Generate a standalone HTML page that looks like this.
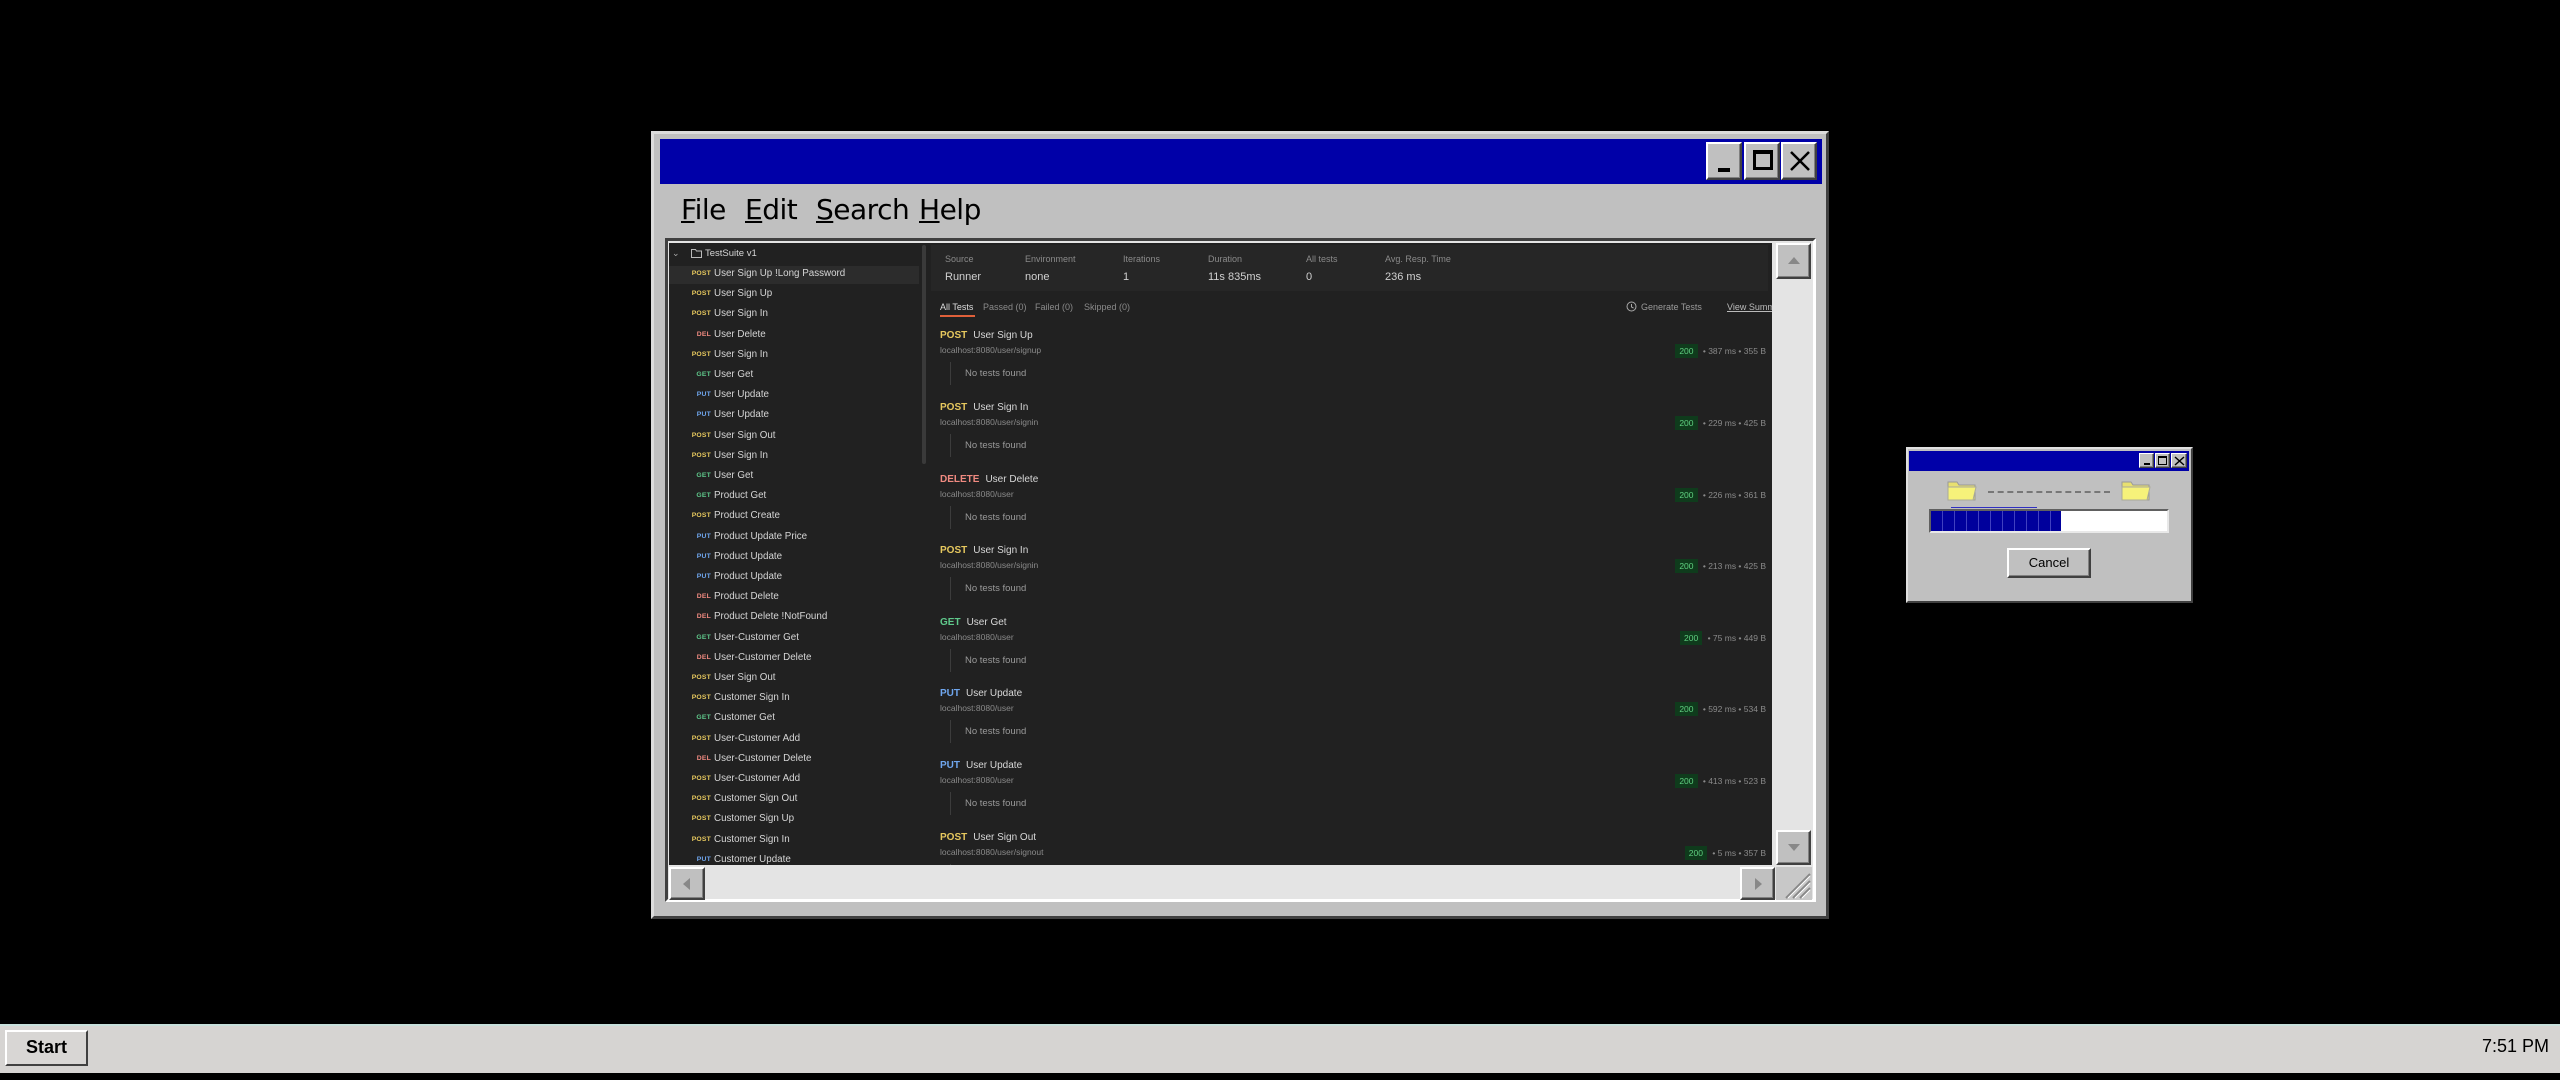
<!DOCTYPE html>
<html><head><meta charset="utf-8">
<style>
*{margin:0;padding:0;box-sizing:border-box}
body{width:2560px;height:1080px;background:#000;position:relative;overflow:hidden;font-family:"Liberation Sans",sans-serif}
.a{position:absolute}
.raised{background:#c0c0c0;border:2px solid;border-color:#fff #404040 #404040 #fff;box-shadow:inset -1px -1px 0 #808080}
.side div.r{position:absolute;left:0;width:254px;height:20px;font-size:9.8px;color:#d6d6d6;line-height:20px}
.side .m{position:absolute;right:212px;font-size:6.8px;font-weight:bold;letter-spacing:.2px}
.side .n{position:absolute;left:45px}
.P{color:#e6c85e}.G{color:#5fc98b}.U{color:#6fa6ee}.D{color:#f08a80}
.lbl{font-size:9px;color:#8a8a8a}
.val{font-size:11px;color:#d0d0d0}
.ent{position:absolute;left:940px;width:828px;height:72px}
.ent .h{position:absolute;top:-6px;left:0;font-size:10px;color:#d8d8d8;white-space:nowrap}
.ent .h b{margin-right:6px}
.ent .u{position:absolute;top:9px;left:0;font-size:8.5px;color:#8a8a8a}
.ent .bar{position:absolute;left:10px;top:26px;width:1px;height:23px;background:#3c3c3c}
.ent .nt{position:absolute;left:25px;top:32px;font-size:9.5px;color:#9a9a9a}
.ent .st{position:absolute;right:2px;top:8px;font-size:8.5px;color:#8a8a8a;white-space:nowrap}
.ent .st span.c{display:inline-block;background:#0f3b1c;color:#5fd080;padding:2px 4px;margin-right:3px}
</style></head><body>

<div class="a" style="left:651px;top:131px;width:1178px;height:788px;background:#c0c0c0;border:3px solid;border-color:#dcdcdc #404040 #404040 #dcdcdc"></div>
<div class="a" style="left:660px;top:139px;width:1162px;height:45px;background:#0000a8"></div>
<div class="a raised" style="left:1706px;top:142px;width:36px;height:38px"><div class="a" style="left:10px;top:24px;width:12px;height:4px;background:#000"></div></div>
<div class="a raised" style="left:1744px;top:142px;width:36px;height:38px"><div class="a" style="left:7px;top:6px;width:20px;height:20px;border:3px solid #000;border-top-width:4px"></div></div>
<div class="a raised" style="left:1781px;top:142px;width:36px;height:38px"><svg class="a" style="left:6px;top:6px" width="22" height="22"><path d="M2 2L20 20M20 2L2 20" stroke="#000" stroke-width="2.5"/></svg></div>

<div class="a" style="left:681px;top:193px;font-size:28px;color:#000;line-height:34px;font-family:'DejaVu Sans',sans-serif;letter-spacing:-0.5px">
<span style="position:absolute;left:0"><u>F</u>ile</span>
<span style="position:absolute;left:64px"><u>E</u>dit</span>
<span style="position:absolute;left:135px"><u>S</u>earch</span>
<span style="position:absolute;left:238px"><u>H</u>elp</span>
</div>

<div class="a" style="left:665px;top:238px;width:1151px;height:664px;border:3px solid;border-color:#404040 #fff #fff #404040;background:#e4e4e4"></div>
<div class="a" style="left:669px;top:243px;width:1103px;height:622px;background:#212121"></div>
<div class="a" style="left:931px;top:245px;width:837px;height:46px;background:#262626"></div>

<div class="a" style="left:669px;top:266px;width:250px;height:18px;background:#2c2c2c"></div>
<div class="a" style="left:922px;top:245px;width:4px;height:219px;background:#3a3a3a;border-radius:2px"></div>
<div class="a" style="left:672px;top:248px;font-size:9px;color:#aaa">&#8964;</div>
<svg class="a" style="left:691px;top:248px" width="11" height="10"><path d="M0.5 1.5h4l1 1.5h5v6.5h-10z" fill="none" stroke="#bbb" stroke-width="1"/></svg>
<div class="a" style="left:705px;top:248px;font-size:9.5px;color:#d6d6d6">TestSuite v1</div>
<div class="a side" style="left:669px;top:264px;width:254px;height:601px;overflow:hidden">
<div class="r" style="top:0"><span class="m P">POST</span><span class="n">User Sign Up !Long Password</span></div>
<div class="r" style="top:20.2px"><span class="m P">POST</span><span class="n">User Sign Up</span></div>
<div class="r" style="top:40.4px"><span class="m P">POST</span><span class="n">User Sign In</span></div>
<div class="r" style="top:60.6px"><span class="m D">DEL</span><span class="n">User Delete</span></div>
<div class="r" style="top:80.8px"><span class="m P">POST</span><span class="n">User Sign In</span></div>
<div class="r" style="top:101px"><span class="m G">GET</span><span class="n">User Get</span></div>
<div class="r" style="top:121.2px"><span class="m U">PUT</span><span class="n">User Update</span></div>
<div class="r" style="top:141.4px"><span class="m U">PUT</span><span class="n">User Update</span></div>
<div class="r" style="top:161.6px"><span class="m P">POST</span><span class="n">User Sign Out</span></div>
<div class="r" style="top:181.8px"><span class="m P">POST</span><span class="n">User Sign In</span></div>
<div class="r" style="top:202px"><span class="m G">GET</span><span class="n">User Get</span></div>
<div class="r" style="top:222.2px"><span class="m G">GET</span><span class="n">Product Get</span></div>
<div class="r" style="top:242.4px"><span class="m P">POST</span><span class="n">Product Create</span></div>
<div class="r" style="top:262.6px"><span class="m U">PUT</span><span class="n">Product Update Price</span></div>
<div class="r" style="top:282.8px"><span class="m U">PUT</span><span class="n">Product Update</span></div>
<div class="r" style="top:303px"><span class="m U">PUT</span><span class="n">Product Update</span></div>
<div class="r" style="top:323.2px"><span class="m D">DEL</span><span class="n">Product Delete</span></div>
<div class="r" style="top:343.4px"><span class="m D">DEL</span><span class="n">Product Delete !NotFound</span></div>
<div class="r" style="top:363.6px"><span class="m G">GET</span><span class="n">User-Customer Get</span></div>
<div class="r" style="top:383.8px"><span class="m D">DEL</span><span class="n">User-Customer Delete</span></div>
<div class="r" style="top:404px"><span class="m P">POST</span><span class="n">User Sign Out</span></div>
<div class="r" style="top:424.2px"><span class="m P">POST</span><span class="n">Customer Sign In</span></div>
<div class="r" style="top:444.4px"><span class="m G">GET</span><span class="n">Customer Get</span></div>
<div class="r" style="top:464.6px"><span class="m P">POST</span><span class="n">User-Customer Add</span></div>
<div class="r" style="top:484.8px"><span class="m D">DEL</span><span class="n">User-Customer Delete</span></div>
<div class="r" style="top:505px"><span class="m P">POST</span><span class="n">User-Customer Add</span></div>
<div class="r" style="top:525.2px"><span class="m P">POST</span><span class="n">Customer Sign Out</span></div>
<div class="r" style="top:545.4px"><span class="m P">POST</span><span class="n">Customer Sign Up</span></div>
<div class="r" style="top:565.6px"><span class="m P">POST</span><span class="n">Customer Sign In</span></div>
<div class="r" style="top:585.8px"><span class="m U">PUT</span><span class="n">Customer Update</span></div>
</div>

<div class="a lbl" style="left:945px;top:254px">Source</div>
<div class="a lbl" style="left:1025px;top:254px">Environment</div>
<div class="a lbl" style="left:1123px;top:254px">Iterations</div>
<div class="a lbl" style="left:1208px;top:254px">Duration</div>
<div class="a lbl" style="left:1306px;top:254px">All tests</div>
<div class="a lbl" style="left:1385px;top:254px">Avg. Resp. Time</div>
<div class="a val" style="left:945px;top:271px">Runner</div>
<div class="a val" style="left:1025px;top:271px">none</div>
<div class="a val" style="left:1123px;top:271px">1</div>
<div class="a val" style="left:1208px;top:271px">11s 835ms</div>
<div class="a val" style="left:1306px;top:271px">0</div>
<div class="a val" style="left:1385px;top:271px">236 ms</div>

<div class="a" style="left:940px;top:302px;font-size:9px;color:#ddd">All Tests</div>
<div class="a" style="left:940px;top:315px;width:35px;height:2px;background:#e0603a"></div>
<div class="a" style="left:983px;top:302px;font-size:9px;color:#8a8a8a">Passed (0)</div>
<div class="a" style="left:1035px;top:302px;font-size:9px;color:#8a8a8a">Failed (0)</div>
<div class="a" style="left:1084px;top:302px;font-size:9px;color:#8a8a8a">Skipped (0)</div>
<svg class="a" style="left:1626px;top:301px" width="11" height="11"><circle cx="5.5" cy="5.5" r="4.5" fill="none" stroke="#aaa" stroke-width="1"/><path d="M5.5 3v3l2 1" stroke="#aaa" fill="none"/></svg>
<div class="a" style="left:1641px;top:302px;font-size:9px;color:#9a9a9a">Generate Tests</div>
<div class="a" style="left:1727px;top:302px;width:45px;overflow:hidden;font-size:9px;color:#bbb;text-decoration:underline;white-space:nowrap">View Summary</div>

<div class="a" style="left:0;top:0;width:1772px;height:865px;overflow:hidden">
<div class="ent" style="top:336px"><div class="h"><b class="P">POST</b>User Sign Up</div><div class="u">localhost:8080/user/signup</div><div class="bar"></div><div class="nt">No tests found</div><div class="st"><span class="c">200</span> • 387 ms • 355 B</div></div>
<div class="ent" style="top:408px"><div class="h"><b class="P">POST</b>User Sign In</div><div class="u">localhost:8080/user/signin</div><div class="bar"></div><div class="nt">No tests found</div><div class="st"><span class="c">200</span> • 229 ms • 425 B</div></div>
<div class="ent" style="top:480px"><div class="h"><b class="D">DELETE</b>User Delete</div><div class="u">localhost:8080/user</div><div class="bar"></div><div class="nt">No tests found</div><div class="st"><span class="c">200</span> • 226 ms • 361 B</div></div>
<div class="ent" style="top:551px"><div class="h"><b class="P">POST</b>User Sign In</div><div class="u">localhost:8080/user/signin</div><div class="bar"></div><div class="nt">No tests found</div><div class="st"><span class="c">200</span> • 213 ms • 425 B</div></div>
<div class="ent" style="top:623px"><div class="h"><b class="G">GET</b>User Get</div><div class="u">localhost:8080/user</div><div class="bar"></div><div class="nt">No tests found</div><div class="st"><span class="c">200</span> • 75 ms • 449 B</div></div>
<div class="ent" style="top:694px"><div class="h"><b class="U">PUT</b>User Update</div><div class="u">localhost:8080/user</div><div class="bar"></div><div class="nt">No tests found</div><div class="st"><span class="c">200</span> • 592 ms • 534 B</div></div>
<div class="ent" style="top:766px"><div class="h"><b class="U">PUT</b>User Update</div><div class="u">localhost:8080/user</div><div class="bar"></div><div class="nt">No tests found</div><div class="st"><span class="c">200</span> • 413 ms • 523 B</div></div>
<div class="ent" style="top:838px"><div class="h"><b class="P">POST</b>User Sign Out</div><div class="u">localhost:8080/user/signout</div><div class="bar"></div><div class="nt">No tests found</div><div class="st"><span class="c">200</span> • 5 ms • 357 B</div></div>
</div>

<div class="a raised" style="left:1776px;top:243px;width:35px;height:36px"><svg class="a" style="left:9px;top:11px" width="14" height="9"><path d="M7 1L13 8H1z" fill="#888"/></svg></div>
<div class="a raised" style="left:1776px;top:830px;width:35px;height:35px"><svg class="a" style="left:9px;top:11px" width="14" height="9"><path d="M1 1H13L7 8z" fill="#888"/></svg></div>
<div class="a raised" style="left:669px;top:867px;width:36px;height:33px"><svg class="a" style="left:11px;top:8px" width="9" height="14"><path d="M8 1V13L1 7z" fill="#888"/></svg></div>
<div class="a raised" style="left:1740px;top:867px;width:35px;height:33px"><svg class="a" style="left:12px;top:8px" width="9" height="14"><path d="M1 1V13L8 7z" fill="#888"/></svg></div>
<div class="a" style="left:1776px;top:867px;width:36px;height:33px;background:#c8c8c8"><svg class="a" style="left:0;top:0" width="36" height="33"><path d="M10 31L34 7M17 31L34 14M24 31L34 21" stroke="#888" stroke-width="2"/><path d="M12 31L34 9M19 31L34 16M26 31L34 23" stroke="#fff" stroke-width="1"/></svg></div>

<div class="a" style="left:1906px;top:447px;width:287px;height:156px;background:#c0c0c0;border:2px solid;border-color:#e0e0e0 #404040 #404040 #e0e0e0"></div>
<div class="a" style="left:1909px;top:451px;width:280px;height:20px;background:#0000a8"></div>
<div class="a raised" style="left:2139px;top:453px;width:15px;height:15px;border-width:1px"><div class="a" style="left:4px;top:9px;width:6px;height:2px;background:#000"></div></div>
<div class="a raised" style="left:2155px;top:453px;width:15px;height:15px;border-width:1px"><div class="a" style="left:2px;top:2px;width:9px;height:9px;border:1.5px solid #000;border-top-width:2px"></div></div>
<div class="a raised" style="left:2171px;top:453px;width:16px;height:15px;border-width:1px"><svg class="a" style="left:2px;top:2px" width="11" height="10"><path d="M1 1L10 9M10 1L1 9" stroke="#000" stroke-width="1.5"/></svg></div>
<svg class="a" style="left:1945px;top:480px" width="35" height="22"><path d="M3 2h9l2 3h16v15H3z" fill="#e8e070" stroke="#999" stroke-width="1"/><path d="M3 7h28l-3 13H3z" fill="#f6f27a" stroke="#aa9" stroke-width="1"/></svg>
<svg class="a" style="left:2119px;top:480px" width="35" height="22"><path d="M3 2h9l2 3h16v15H3z" fill="#e8e070" stroke="#999" stroke-width="1"/><path d="M3 7h28l-3 13H3z" fill="#f6f27a" stroke="#aa9" stroke-width="1"/></svg>
<div class="a" style="left:1988px;top:491px;width:122px;height:0;border-top:2px dashed #777"></div>
<div class="a" style="left:1951px;top:507px;width:86px;height:1px;background:#3030c0"></div>
<div class="a" style="left:1929px;top:509px;width:240px;height:24px;background:#fff;border:2px solid;border-color:#606060 #e8e8e8 #e8e8e8 #606060"></div>
<div class="a" style="left:1931px;top:511px;width:130px;height:20px;background:repeating-linear-gradient(90deg,#00009c 0 11px,#4040c0 11px 12px)"></div>
<div class="a raised" style="left:2007px;top:548px;width:84px;height:30px;font-size:13px;line-height:26px;text-align:center;color:#000">Cancel</div>

<div class="a" style="left:0;top:1024px;width:2560px;height:49px;background:#d6d4d2;border-top:2px solid #c8e0dc"></div>
<div class="a" style="left:5px;top:1030px;width:83px;height:36px;background:#d8d6d4;border:2px solid;border-color:#fff #404040 #404040 #fff;font-size:18px;font-weight:bold;text-align:center;line-height:31px;color:#000">Start</div>
<div class="a" style="left:2482px;top:1036px;font-size:18px;color:#000">7:51 PM</div>
</body></html>
